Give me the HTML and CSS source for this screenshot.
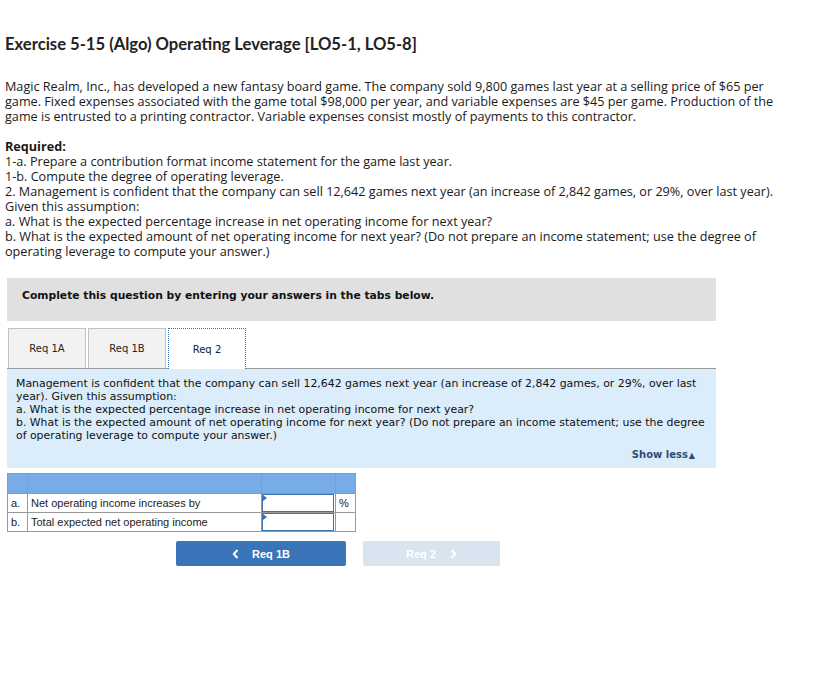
FILE: index.html
```html
<!DOCTYPE html>
<html>
<head>
<meta charset="utf-8">
<link rel="stylesheet" href="styles.css">
</head>
<body>
<div class="page">
  <h1 class="title">Exercise 5-15 (Algo) Operating Leverage [LO5-1, LO5-8]</h1>
  <p class="intro">Magic Realm, Inc., has developed a new fantasy board game. The company sold 9,800 games last year at a selling price of $65 per game. Fixed expenses associated with the game total $98,000 per year, and variable expenses are $45 per game. Production of the game is entrusted to a printing contractor. Variable expenses consist mostly of payments to this contractor.</p>
  <div class="req">
    <div class="req-head">Required:</div>
    <div>1-a. Prepare a contribution format income statement for the game last year.</div>
    <div>1-b. Compute the degree of operating leverage.</div>
    <div>2. Management is confident that the company can sell 12,642 games next year (an increase of 2,842 games, or 29%, over last year). Given this assumption:</div>
    <div>a. What is the expected percentage increase in net operating income for next year?</div>
    <div>b. What is the expected amount of net operating income for next year? (Do not prepare an income statement; use the degree of operating leverage to compute your answer.)</div>
  </div>

  <div class="box">
    <div class="banner">Complete this question by entering your answers in the tabs below.</div>
    <div class="tabs">
      <div class="tab">Req 1A</div>
      <div class="tab">Req 1B</div>
      <div class="tab active">Req 2</div>
    </div>
    <div class="panel">
      <p>Management is confident that the company can sell 12,642 games next year (an increase of 2,842 games, or 29%, over last year). Given this assumption:<br>a. What is the expected percentage increase in net operating income for next year?<br>b. What is the expected amount of net operating income for next year? (Do not prepare an income statement; use the degree of operating leverage to compute your answer.)</p>
      <div class="show-less">Show less<span class="tri">&#9650;</span></div>
    </div>

    <table class="answers">
      <tr class="hdr"><td class="c1"></td><td class="c2"></td><td class="c3"></td><td class="c4"></td></tr>
      <tr><td class="c1">a.</td><td class="c2">Net operating income increases by</td><td class="c3"><div class="inp"><span class="flag"></span></div></td><td class="c4">%</td></tr>
      <tr><td class="c1">b.</td><td class="c2">Total expected net operating income</td><td class="c3"><div class="inp"><span class="flag"></span></div></td><td class="c4"></td></tr>
    </table>

    <div class="nav">
      <div class="btn prev"><svg class="chev" width="7" height="10" viewBox="0 0 7 10"><path d="M5.5 1 L1.8 5 L5.5 9" fill="none" stroke="#fff" stroke-width="2"/></svg>Req 1B</div>
      <div class="btn next">Req 2<svg class="chev" width="7" height="10" viewBox="0 0 7 10"><path d="M1.5 1 L5.2 5 L1.5 9" fill="none" stroke="#fff" stroke-width="2"/></svg></div>
    </div>
  </div>
</div>
</body>
</html>
```

FILE: styles.css
```css
html, body { margin: 0; padding: 0; background: #fff; }
.page {
  padding: 0 0 0 5px;
  width: 785px;
  font-family: "Open Sans", Lato, sans-serif;
  color: #1a1a1a;
}
.title {
  margin: 0;
  padding-top: 34px;
  font-family: Lato, sans-serif;
  font-size: 16.6px;
  line-height: 20px;
  font-weight: 700;
  color: #222;
}
.intro {
  margin: 25px 0 0 0;
  font-size: 12.65px;
  line-height: 15px;
}
.req {
  margin-top: 15px;
  font-size: 12.65px;
  line-height: 15px;
}
.req-head { font-weight: 700; }

.box { margin: 19px 0 0 2px; width: 709px; }
.banner {
  background: #e0e0e0;
  height: 43px;
  box-sizing: border-box;
  padding: 11px 0 0 15px;
  font-family: "DejaVu Sans", Verdana, sans-serif;
  font-weight: 700;
  font-size: 10.75px;
  line-height: 13px;
  color: #111;
}
.tabs {
  display: flex;
  gap: 2px;
  margin-top: 7px;
  padding-left: 1px;
  border-bottom: 1px solid #999;
}
.tab {
  width: 76px;
  height: 39px;
  box-sizing: content-box;
  border: 1px solid #c2c2c2;
  border-bottom: none;
  background: #f2f2f2;
  font-family: "DejaVu Sans", Verdana, sans-serif;
  font-size: 10px;
  color: #222;
  display: flex;
  align-items: center;
  justify-content: center;
}
.tab.active {
  background: #fff;
  border: 1px dotted #3a6fb0;
  border-bottom: none;
  margin-bottom: -1px;
  height: 40px;
}
.panel {
  background: #dbecfa;
  height: 99px;
  box-sizing: border-box;
  padding: 8px 3px 0 9px;
  font-family: "DejaVu Sans", Verdana, sans-serif;
  font-size: 10.9px;
  line-height: 13px;
  color: #111;
  display: flex;
  flex-direction: column;
}
.panel p { margin: 0; }
.show-less {
  align-self: flex-end;
  margin-top: 6px;
  margin-right: 18px;
  font-weight: 700;
  font-size: 10px;
  color: #2b4d78;
}
.tri { font-size: 8px; margin-left: 1px; }

.answers {
  margin-top: 5px;
  border-collapse: collapse;
  font-family: "Liberation Sans", Arial, sans-serif;
  font-size: 11px;
  color: #222;
}
.answers td {
  border: 1px solid #999;
  height: 18px;
  padding: 0 3px;
}
.answers .hdr td { background: #78ace6; height: 19px; }
.c1 { width: 13px; }
.c2 { width: 227px; }
.c3 { width: 73px; padding: 0 !important; }
.c4 { width: 13px; }
.inp {
  position: relative;
  height: 16px;
  border: 1px solid #3b72b5;
  background: #fff;
  margin: 0 1px 0 0;
}
.flag {
  position: absolute;
  left: 0; top: 0;
  width: 0; height: 0;
  border-top: 3px solid transparent;
  border-bottom: 3px solid transparent;
  border-left: 4px solid #3b72b5;
}

.nav {
  display: flex;
  gap: 17px;
  margin: 9px 0 0 169px;
}
.btn {
  height: 25px;
  border-radius: 2px;
  display: flex;
  align-items: center;
  justify-content: center;
  font-family: "Liberation Sans", Arial, sans-serif;
  font-weight: 700;
  font-size: 11px;
  color: #fff;
}
.btn.prev { width: 170px; background: #3a75b9; }
.btn.next { width: 137px; background: #d9e4f1; }
.chev { display: block; }
.prev .chev { margin-right: 13px; }
.next .chev { margin-left: 14px; }
```
